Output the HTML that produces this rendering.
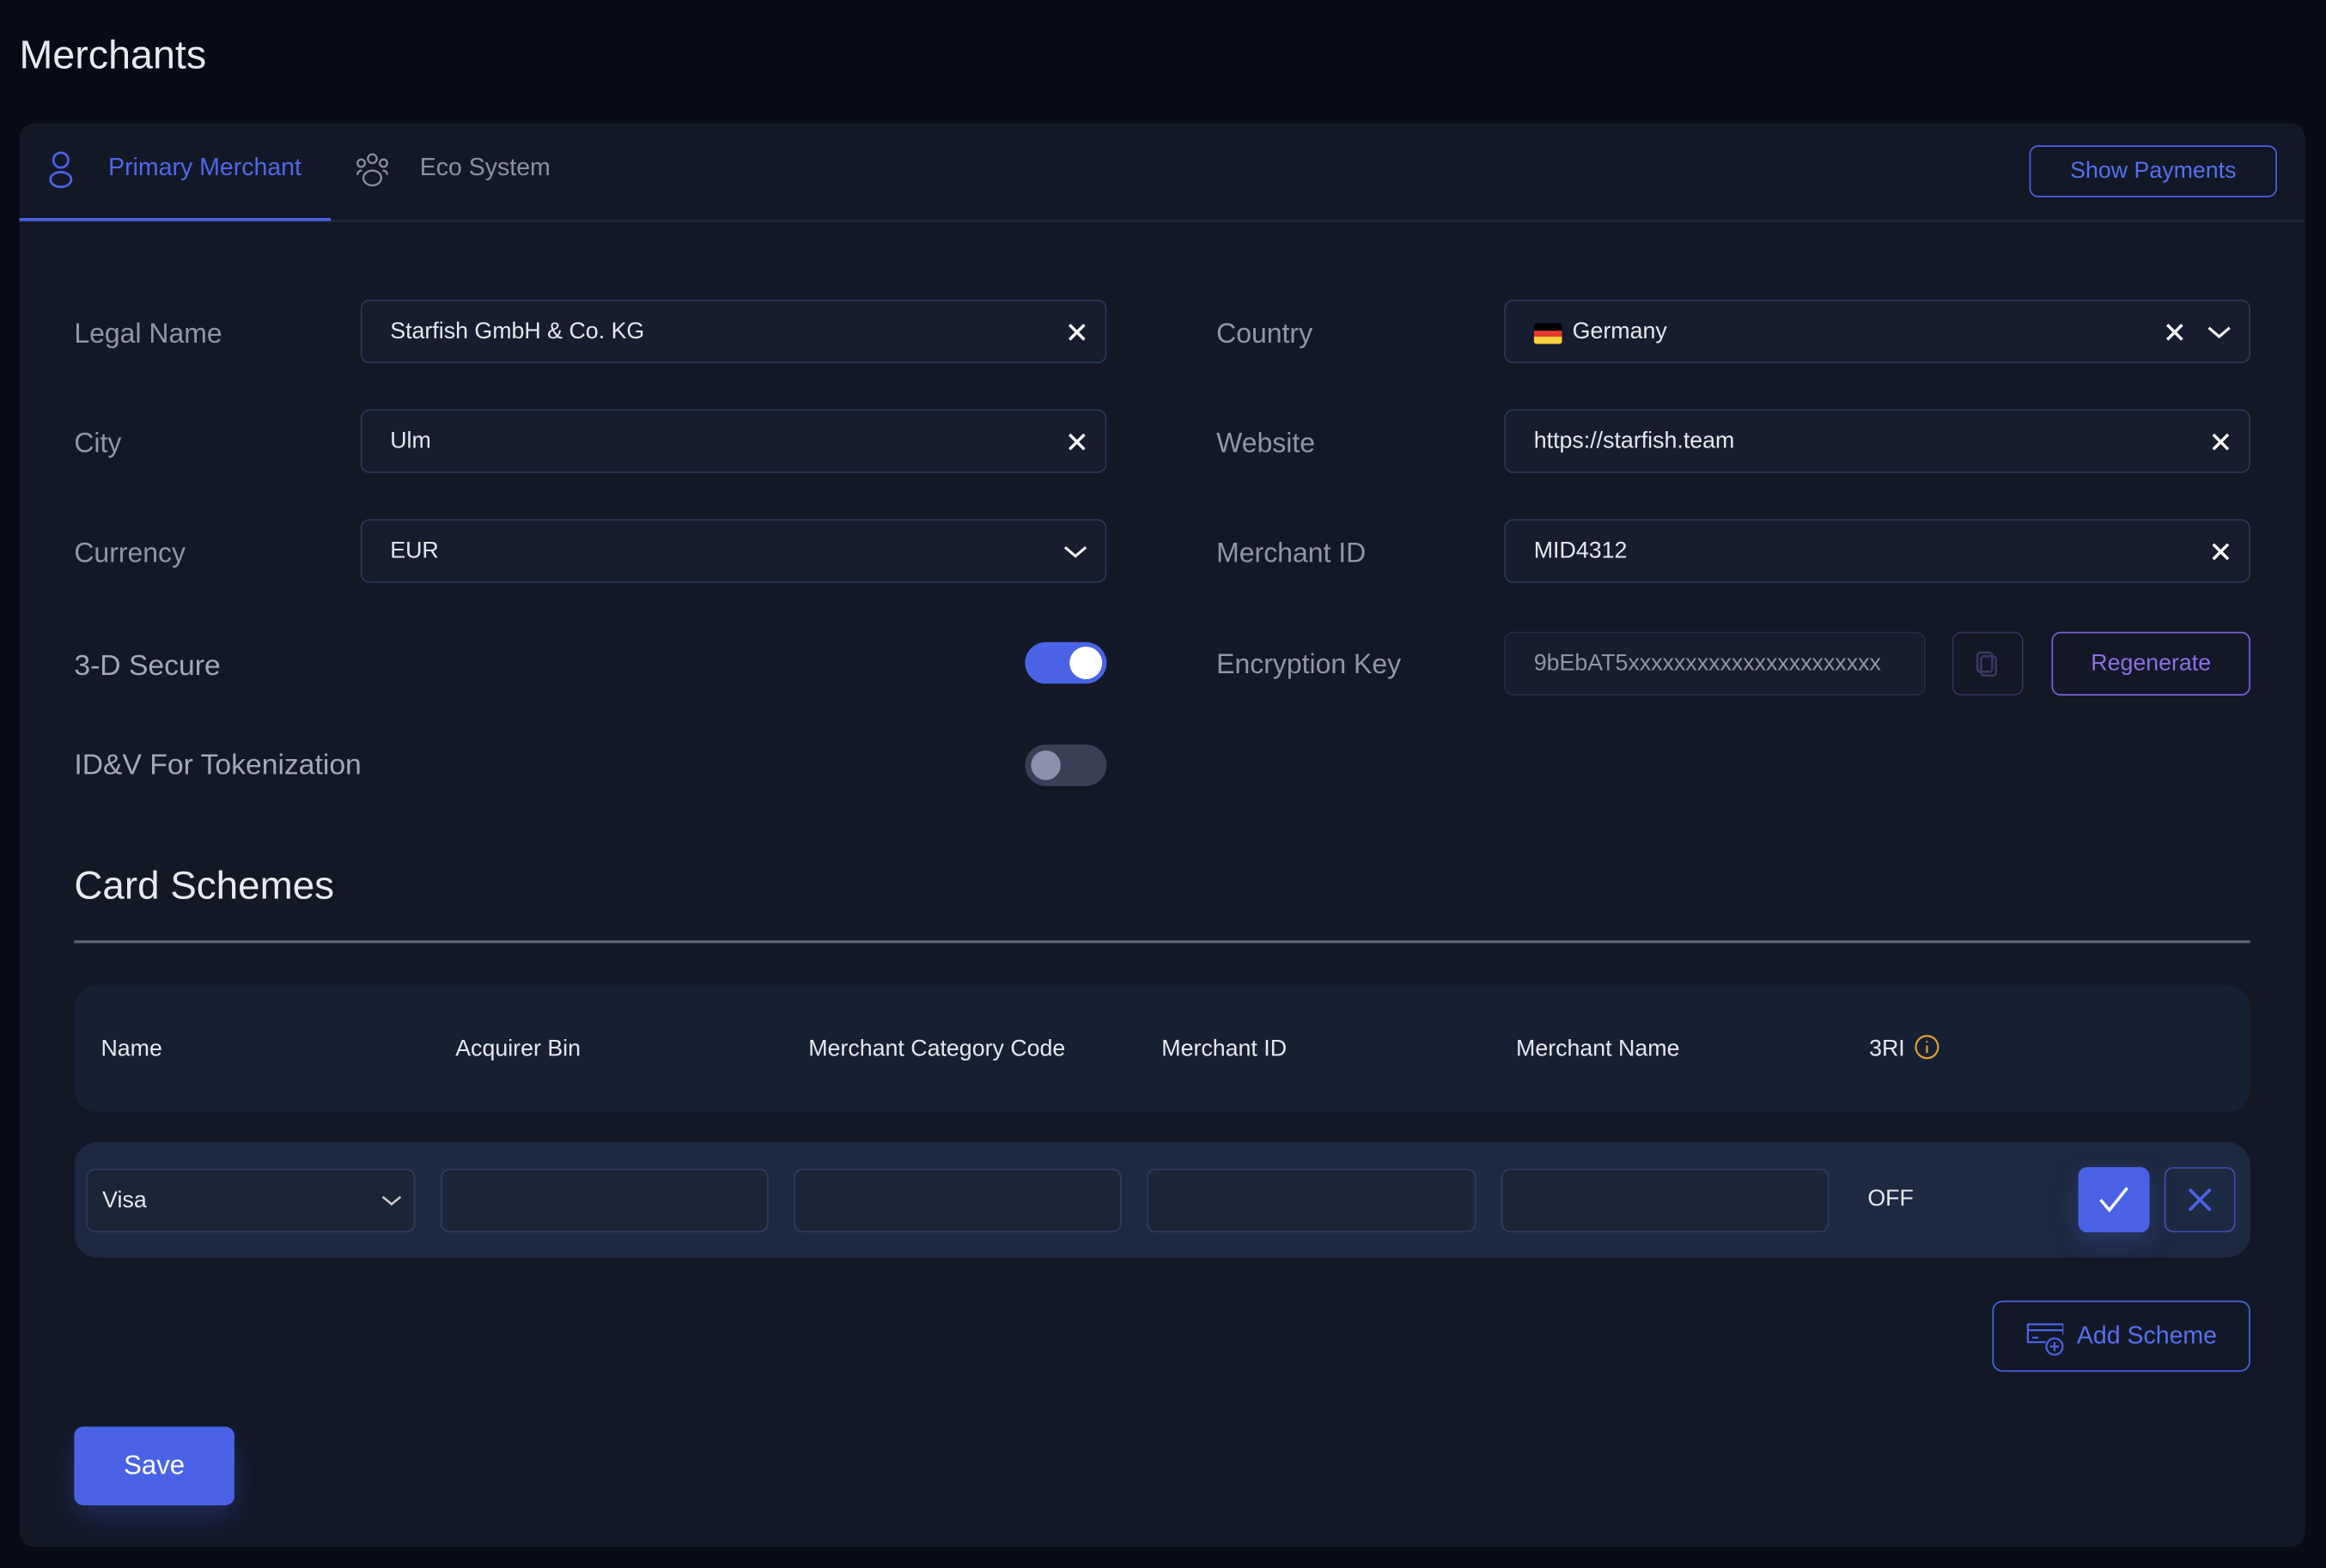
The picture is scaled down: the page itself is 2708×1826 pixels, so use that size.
<!DOCTYPE html>
<html><head><meta charset="utf-8"><style>
html,body{margin:0;padding:0;background:#070a17;width:2708px;height:1826px;overflow:hidden}
#w{position:absolute;left:0;top:0;width:1568px;height:1057px;transform:scale(1.72704);transform-origin:0 0;font-family:"Liberation Sans",sans-serif;color:#e6e8ef}
.a{position:absolute}
.card{left:13px;top:83px;width:1541px;height:960px;background:#121826;border-radius:10px}
.lbl{font-size:18.5px;color:#9096a8}
.fld{background:#151d2e;border:1.5px solid #2a3856;border-radius:6px;height:43px;box-sizing:border-box}
.ft{position:absolute;left:19px;top:12px;font-size:15.5px;color:#e6e8ef}
.x{position:absolute;right:12px;top:14px}
.th{font-size:15.5px;color:#e6e8ef;top:699px}
.ci{background:#1b2538;border:1.5px solid #2e3c5c;border-radius:6px;height:43px;top:788px;box-sizing:border-box}
</style></head><body><div id="w">
<div class="a" style="left:13px;top:22px;font-size:27px;color:#e8eaf0">Merchants</div>
<div class="a card"></div>
<div class="a" style="left:13px;top:148px;width:1541px;height:1.5px;background:#1c2436"></div>
<div class="a" style="left:13px;top:147px;width:210px;height:2px;background:#4a63e6"></div>
<svg class="a" style="left:30px;top:101px" width="22" height="26" viewBox="0 0 22 26" fill="none" stroke="#4a63e6" stroke-width="1.6"><circle cx="11" cy="7" r="5"/><ellipse cx="11" cy="20" rx="7" ry="5"/></svg>
<div class="a" style="left:73px;top:104px;font-size:16.5px;color:#4f68ea">Primary Merchant</div>
<svg class="a" style="left:238px;top:102px" width="26" height="26" viewBox="0 0 26 26" fill="none" stroke="#8a90a2" stroke-width="1.3"><circle cx="13" cy="5" r="3"/><circle cx="5.5" cy="8" r="2.5"/><circle cx="20.5" cy="8" r="2.5"/><ellipse cx="13" cy="18" rx="6" ry="5"/><path d="M3 16c0-2 1-3 3-3M23 16c0-2-1-3-3-3"/></svg>
<div class="a" style="left:283px;top:104px;font-size:16.5px;color:#8a90a2">Eco System</div>
<div class="a" style="left:1368px;top:98px;width:167px;height:35px;box-sizing:border-box;border:1.5px solid #4a63e6;border-radius:6px;color:#5670f0;font-size:15.5px;text-align:center;line-height:33px">Show Payments</div>

<div class="a lbl" style="left:50px;top:214px">Legal Name</div>
<div class="a fld" style="left:243px;top:202px;width:503px"><span class="ft">Starfish GmbH &amp; Co. KG</span><svg class="x" width="14" height="14" viewBox="0 0 14 14" stroke="#fff" stroke-width="2"><path d="M2 2l10 10M12 2L2 12"/></svg></div>
<div class="a lbl" style="left:50px;top:288px">City</div>
<div class="a fld" style="left:243px;top:276px;width:503px"><span class="ft">Ulm</span><svg class="x" width="14" height="14" viewBox="0 0 14 14" stroke="#fff" stroke-width="2"><path d="M2 2l10 10M12 2L2 12"/></svg></div>
<div class="a lbl" style="left:50px;top:362px">Currency</div>
<div class="a fld" style="left:243px;top:350px;width:503px"><span class="ft">EUR</span><svg class="x" width="16" height="14" viewBox="0 0 16 14" fill="none" stroke="#fff" stroke-width="1.8"><path d="M1 4l7 6 7-6"/></svg></div>
<div class="a lbl" style="left:50px;top:438px;font-size:19.5px;color:#a2a8b8">3-D Secure</div>
<div class="a" style="left:691px;top:433px;width:55px;height:28px;border-radius:14px;background:#4a63e6"><div class="a" style="right:3px;top:3px;width:22px;height:22px;border-radius:50%;background:#fff"></div></div>
<div class="a lbl" style="left:50px;top:505px;font-size:19.5px;color:#a2a8b8">ID&amp;V For Tokenization</div>
<div class="a" style="left:691px;top:502px;width:55px;height:28px;border-radius:14px;background:#3a3f56"><div class="a" style="left:4px;top:4px;width:20px;height:20px;border-radius:50%;background:#8c90aa"></div></div>

<div class="a lbl" style="left:820px;top:214px">Country</div>
<div class="a fld" style="left:1014px;top:202px;width:503px"><div class="a" style="left:19px;top:15px;width:19px;height:14px;border-radius:2px;overflow:hidden"><div style="height:33%;background:#000"></div><div style="height:34%;background:#e03a2c"></div><div style="height:33%;background:#fcd13f"></div></div><span class="ft" style="left:45px">Germany</span>
<svg class="a" style="right:43px;top:14px" width="14" height="14" viewBox="0 0 14 14" stroke="#fff" stroke-width="2"><path d="M2 2l10 10M12 2L2 12"/></svg><svg class="x" width="16" height="14" viewBox="0 0 16 14" fill="none" stroke="#fff" stroke-width="1.8"><path d="M1 4l7 6 7-6"/></svg></div>
<div class="a lbl" style="left:820px;top:288px">Website</div>
<div class="a fld" style="left:1014px;top:276px;width:503px"><span class="ft">https://starfish.team</span><svg class="x" width="14" height="14" viewBox="0 0 14 14" stroke="#fff" stroke-width="2"><path d="M2 2l10 10M12 2L2 12"/></svg></div>
<div class="a lbl" style="left:820px;top:362px">Merchant ID</div>
<div class="a fld" style="left:1014px;top:350px;width:503px"><span class="ft">MID4312</span><svg class="x" width="14" height="14" viewBox="0 0 14 14" stroke="#fff" stroke-width="2"><path d="M2 2l10 10M12 2L2 12"/></svg></div>
<div class="a lbl" style="left:820px;top:437px">Encryption Key</div>
<div class="a fld" style="left:1014px;top:426px;width:284px;border-color:#222c42;overflow:hidden"><span class="ft" style="color:#8f95a5;white-space:nowrap">9bEbAT5xxxxxxxxxxxxxxxxxxxxxx</span></div>
<div class="a" style="left:1316px;top:426px;width:48px;height:43px;border:1.5px solid #352f5a;border-radius:6px;box-sizing:border-box"><svg class="a" style="left:15px;top:12px" width="16" height="18" viewBox="0 0 16 18" fill="none" stroke="#3c3862" stroke-width="1.5"><rect x="1" y="1" width="10" height="13" rx="2"/><rect x="3.5" y="3.5" width="10" height="13" rx="2"/></svg></div>
<div class="a" style="left:1383px;top:426px;width:134px;height:43px;border:1.5px solid #7b5fd8;border-radius:6px;box-sizing:border-box;color:#8d6fe6;font-size:15.5px;text-align:center;line-height:41px">Regenerate</div>

<div class="a" style="left:50px;top:582px;font-size:26.5px;color:#e8eaf0">Card Schemes</div>
<div class="a" style="left:50px;top:634px;width:1467px;height:1.5px;background:#5a6070"></div>
<div class="a" style="left:50px;top:664px;width:1467px;height:86px;border-radius:16px;background:#162033"></div>
<div class="a th" style="left:68px">Name</div>
<div class="a th" style="left:307px">Acquirer Bin</div>
<div class="a th" style="left:545px">Merchant Category Code</div>
<div class="a th" style="left:783px">Merchant ID</div>
<div class="a th" style="left:1022px">Merchant Name</div>
<div class="a th" style="left:1260px">3RI</div>
<svg class="a" style="left:1290px;top:697px" width="18" height="18" viewBox="0 0 18 18" fill="none" stroke="#e0a030" stroke-width="1.3"><circle cx="9" cy="9" r="7.5"/><path d="M9 8v5M9 5v1"/></svg>
<div class="a" style="left:50px;top:770px;width:1467px;height:78px;border-radius:16px;background:#1d2940"></div>
<div class="a ci" style="left:58px;width:222px"><span class="ft" style="left:10px">Visa</span><svg class="x" style="right:8px;top:15px" width="14" height="12" viewBox="0 0 14 12" fill="none" stroke="#ccc" stroke-width="1.5"><path d="M1 3l6 5 6-5"/></svg></div>
<div class="a ci" style="left:297px;width:221px"></div>
<div class="a ci" style="left:535px;width:221px"></div>
<div class="a ci" style="left:773px;width:222px"></div>
<div class="a ci" style="left:1012px;width:221px"></div>
<div class="a" style="left:1259px;top:800px;font-size:15.5px">OFF</div>
<div class="a" style="left:1401px;top:787px;width:48px;height:44px;border-radius:6px;background:#4a63e6;box-shadow:0 6px 16px rgba(74,99,230,.25)"><svg class="a" style="left:13px;top:12px" width="22" height="20" viewBox="0 0 22 20" fill="none" stroke="#fff" stroke-width="2"><path d="M2 10l6 7L20 2"/></svg></div>
<div class="a" style="left:1459px;top:787px;width:48px;height:44px;border-radius:6px;border:1.5px solid #3a4fa8;box-sizing:border-box"><svg class="a" style="left:15px;top:13px" width="16" height="16" viewBox="0 0 16 16" stroke="#4a63e6" stroke-width="2.2"><path d="M1 1l14 14M15 1L1 15"/></svg></div>
<div class="a" style="left:1343px;top:877px;width:174px;height:48px;border:1.5px solid #4a63e6;border-radius:7px;box-sizing:border-box"><svg class="a" style="left:21px;top:13px" width="26" height="24" viewBox="0 0 26 24" fill="none" stroke="#4a63e6" stroke-width="1.3"><path d="M14 14H2V2h24v7M2 6h24M5 11h4"/><circle cx="20" cy="17" r="5.5"/><path d="M20 14v6M17 17h6"/></svg><span class="a" style="left:56px;top:14px;font-size:16.5px;color:#5670f0">Add Scheme</span></div>
<div class="a" style="left:50px;top:962px;width:108px;height:53px;border-radius:6px;background:#4a63e6;box-shadow:0 8px 18px rgba(74,99,230,.25);text-align:center;line-height:53px;font-size:18px;color:#fff">Save</div>
</div></body></html>
